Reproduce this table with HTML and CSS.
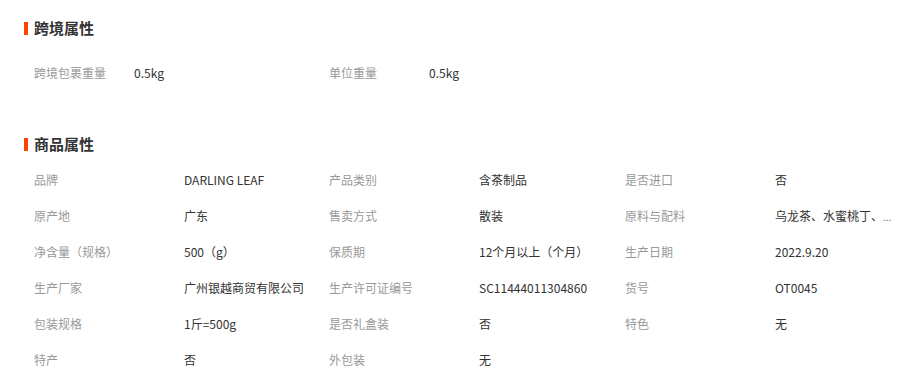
FILE: index.html
```html
<!DOCTYPE html>
<html lang="zh-CN">
<head>
<meta charset="utf-8">
<link rel="stylesheet" href="styles.css">
</head>
<body>
<div class="page">
  <section class="block block-cross">
    <h2 class="title">跨境属性</h2>
    <div class="grid grid-cross">
      <div class="item"><span class="label">跨境包裹重量</span><span class="value">0.5kg</span></div>
      <div class="item"><span class="label">单位重量</span><span class="value">0.5kg</span></div>
    </div>
  </section>
  <section class="block block-goods">
    <h2 class="title">商品属性</h2>
    <div class="grid grid-goods">
      <div class="item"><span class="label">品牌</span><span class="value">DARLING LEAF</span></div>
      <div class="item"><span class="label">产品类别</span><span class="value">含茶制品</span></div>
      <div class="item"><span class="label">是否进口</span><span class="value">否</span></div>

      <div class="item"><span class="label">原产地</span><span class="value">广东</span></div>
      <div class="item"><span class="label">售卖方式</span><span class="value">散装</span></div>
      <div class="item"><span class="label">原料与配料</span><span class="value">乌龙茶、水蜜桃丁、<span class="dots">...</span></span></div>

      <div class="item"><span class="label">净含量（规格）</span><span class="value">500（g）</span></div>
      <div class="item"><span class="label">保质期</span><span class="value">12个月以上（个月）</span></div>
      <div class="item"><span class="label">生产日期</span><span class="value">2022.9.20</span></div>

      <div class="item"><span class="label">生产厂家</span><span class="value">广州银越商贸有限公司</span></div>
      <div class="item"><span class="label">生产许可证编号</span><span class="value">SC11444011304860</span></div>
      <div class="item"><span class="label">货号</span><span class="value">OT0045</span></div>

      <div class="item"><span class="label">包装规格</span><span class="value">1斤=500g</span></div>
      <div class="item"><span class="label">是否礼盒装</span><span class="value">否</span></div>
      <div class="item"><span class="label">特色</span><span class="value">无</span></div>

      <div class="item"><span class="label">特产</span><span class="value">否</span></div>
      <div class="item"><span class="label">外包装</span><span class="value">无</span></div>
    </div>
  </section>
</div>
</body>
</html>
```
FILE: styles.css
```css
html, body {
  margin: 0;
  padding: 0;
  background: #fff;
}
body {
  font-family: "Noto Sans CJK SC", "Microsoft YaHei", sans-serif;
  font-size: 12px;
  color: #333;
}
.page {
  width: 899px;
}
.block-cross {
  padding-top: 18px;
}
.block-goods {
  padding-top: 44px;
}
.title {
  margin: 0 0 0 24px;
  height: 20px;
  line-height: 20px;
  font-size: 15px;
  font-weight: bold;
  color: #333;
  display: flex;
  align-items: center;
  gap: 6px;
}
.title::before {
  content: "";
  width: 4px;
  height: 13px;
  background: #ff4400;
}
.grid {
  display: grid;
  padding-left: 34px;
}
.grid-cross {
  margin-top: 16px;
  grid-template-columns: 295px 296px;
}
.grid-cross .label {
  width: 100px;
}
.grid-goods {
  margin-top: 7px;
  grid-template-columns: 295px 296px 1fr;
}
.grid-goods .label {
  width: 150px;
}
.item {
  display: flex;
  height: 36px;
  align-items: center;
  min-width: 0;
}
.label {
  flex: none;
  color: #999;
  white-space: nowrap;
}
.value {
  color: #333;
  white-space: nowrap;
}
.dots {
  font-size: 10px;
  color: #666;
}
```
